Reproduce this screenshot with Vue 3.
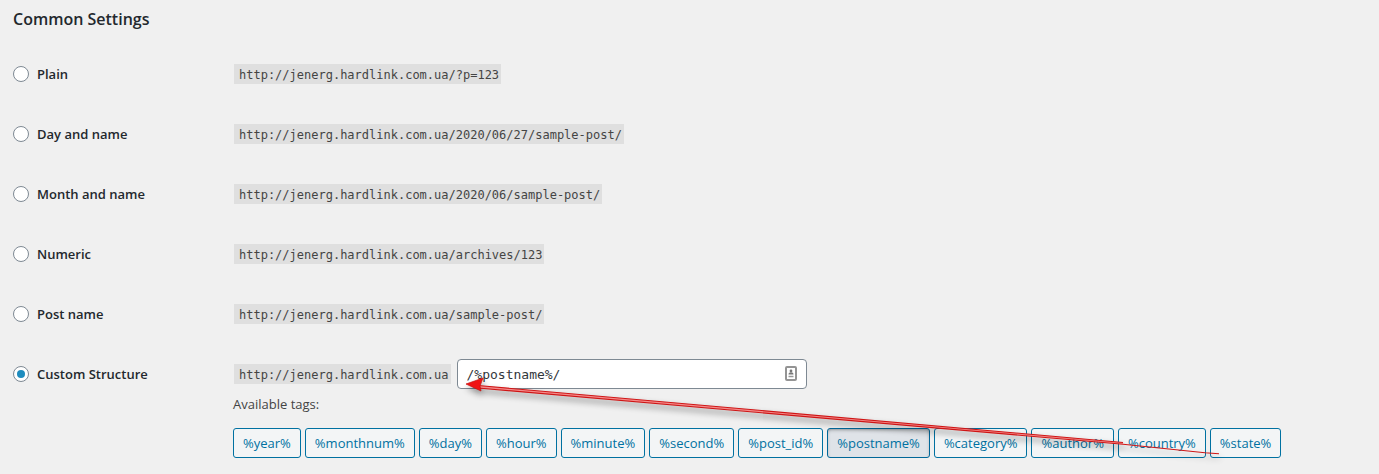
<template>
  <form class="permalinks" @submit.prevent>
    <h2 class="title">Common Settings</h2>

    <div v-for="item in structures" :key="item.id" class="row">
      <label class="choice">
        <input v-model="selected" type="radio" name="selection" :value="item.id" />
        {{ item.label }}
      </label>
      <div><code>{{ siteUrl }}{{ item.path }}</code></div>
    </div>

    <div class="row custom">
      <label class="choice">
        <input v-model="selected" type="radio" name="selection" value="custom" />
        Custom Structure
      </label>
      <div>
        <div class="structure">
          <code>{{ siteUrl }}</code>
          <div class="field">
            <input v-model="structure" type="text" aria-label="Custom structure" />
            <svg class="autofill" width="12" height="16" viewBox="0 0 12 16">
              <rect x="1" y="1" width="10" height="13" rx="1" fill="#fff" stroke="#949494" stroke-width="2" />
              <circle cx="6" cy="5" r="1.4" fill="#777" />
              <path d="M3.5 8.6c0-1.6 1-2.3 2.5-2.3s2.5.7 2.5 2.3z" fill="#777" />
              <path d="M3.5 10.5h5" stroke="#999" stroke-width="1.5" />
            </svg>
          </div>
        </div>
        <p class="hint">Available tags:</p>
        <div class="tags">
          <button
            v-for="tag in tags"
            :key="tag"
            type="button"
            :class="{ active: structure.includes(`%${tag}%`) }"
            @click="toggleTag(tag)"
          >%{{ tag }}%</button>
        </div>
      </div>
    </div>

    <!-- arrow from the tags to the structure field -->
    <svg class="arrow" width="800" height="104" viewBox="0 0 800 104">
      <path d="M38 15.5L683 72.5L683 74L38 18z" fill="#f58a8a" />
      <path d="M38 15.5L683 72.5" stroke="#cf1515" stroke-width="1.1" />
      <path d="M38 18L683 74.3L765 82.8L779 83.7" fill="none" stroke="#cf1515" stroke-width="1.1" />
      <path d="M26 14L43 8L40 16L41 21z" fill="#f01414" stroke="#c81010" stroke-width="0.7" />
    </svg>
  </form>
</template>

<script setup>
import { ref } from 'vue';

const siteUrl = 'http://jenerg.hardlink.com.ua';

const structures = [
  { id: 'plain', label: 'Plain', path: '/?p=123' },
  { id: 'day', label: 'Day and name', path: '/2020/06/27/sample-post/' },
  { id: 'month', label: 'Month and name', path: '/2020/06/sample-post/' },
  { id: 'numeric', label: 'Numeric', path: '/archives/123' },
  { id: 'post', label: 'Post name', path: '/sample-post/' },
];

const tags = [
  'year', 'monthnum', 'day', 'hour', 'minute', 'second',
  'post_id', 'postname', 'category', 'author', 'country', 'state',
];

const selected = ref('custom');
const structure = ref('/%postname%/');

// add the tag, or drop it when it is already used
const toggleTag = (tag) => {
  const part = `%${tag}%/`;
  selected.value = 'custom';
  structure.value = structure.value.includes(part)
    ? structure.value.replace(part, '')
    : structure.value + part;
};
</script>

<style>
body {
  margin: 0;
  background: #f0f0f0;
}
</style>

<style scoped>
.permalinks {
  position: relative;
  padding: 8px 13px 16px;
  overflow: hidden;
  color: #444;
  font: 13px/20px "Open Sans", "Noto Sans", sans-serif;
}

.title {
  margin: 0 0 14px;
  color: #23282d;
  font-size: 16px;
  font-weight: 600;
  line-height: 22px;
}

.row {
  display: grid;
  grid-template-columns: 220px 1fr;
  align-items: center;
  height: 60px;
}

.row.custom {
  align-items: start;
  height: auto;
  padding-top: 15px;
}

.choice {
  display: flex;
  align-items: center;
  gap: 8px;
  color: #23282d;
  font-size: 13px;
  font-weight: 600;
}

.custom .choice {
  height: 30px;
}

input[type="radio"] {
  display: grid;
  place-content: center;
  width: 16px;
  height: 16px;
  margin: 0;
  border: 1px solid #7e8993;
  border-radius: 50%;
  background: #fff;
  appearance: none;
}

input[type="radio"]:checked::before {
  width: 8px;
  height: 8px;
  border-radius: 50%;
  background: #1e8cbe;
  content: "";
}

code {
  display: inline-block;
  margin: 0 1px;
  padding: 2px 2px 0 5px;
  background: #dfdfdf;
  font: 12px/18px "DejaVu Sans Mono", monospace;
}

.structure {
  display: flex;
  align-items: baseline;
  gap: 5px;
}

.field {
  position: relative;
  width: 350px;
}

.field input {
  box-sizing: border-box;
  display: block;
  width: 100%;
  height: 30px;
  padding: 0 32px 0 9px;
  border: 1px solid #7e8993;
  border-radius: 4px;
  background: #fff;
  color: #32373c;
  font: 13px/28px "DejaVu Sans Mono", monospace;
}

.autofill {
  position: absolute;
  top: 7px;
  right: 10px;
}

.hint {
  margin: 5px 0 14px;
}

.tags {
  display: flex;
  flex-wrap: wrap;
  gap: 4px;
}

button {
  height: 30px;
  padding: 0 9px;
  border: 1px solid #0071a1;
  border-radius: 3px;
  background: #f3f5f6;
  color: #0071a1;
  font: inherit;
  cursor: pointer;
}

button.active {
  border-color: #006799;
  background: #dfe3e8;
  box-shadow: inset 0 2px 5px -3px #32373c;
}

.arrow {
  position: absolute;
  top: 370px;
  left: 440px;
  filter: drop-shadow(1px 4px 3px rgba(0, 0, 0, 0.4));
  pointer-events: none;
}
</style>
